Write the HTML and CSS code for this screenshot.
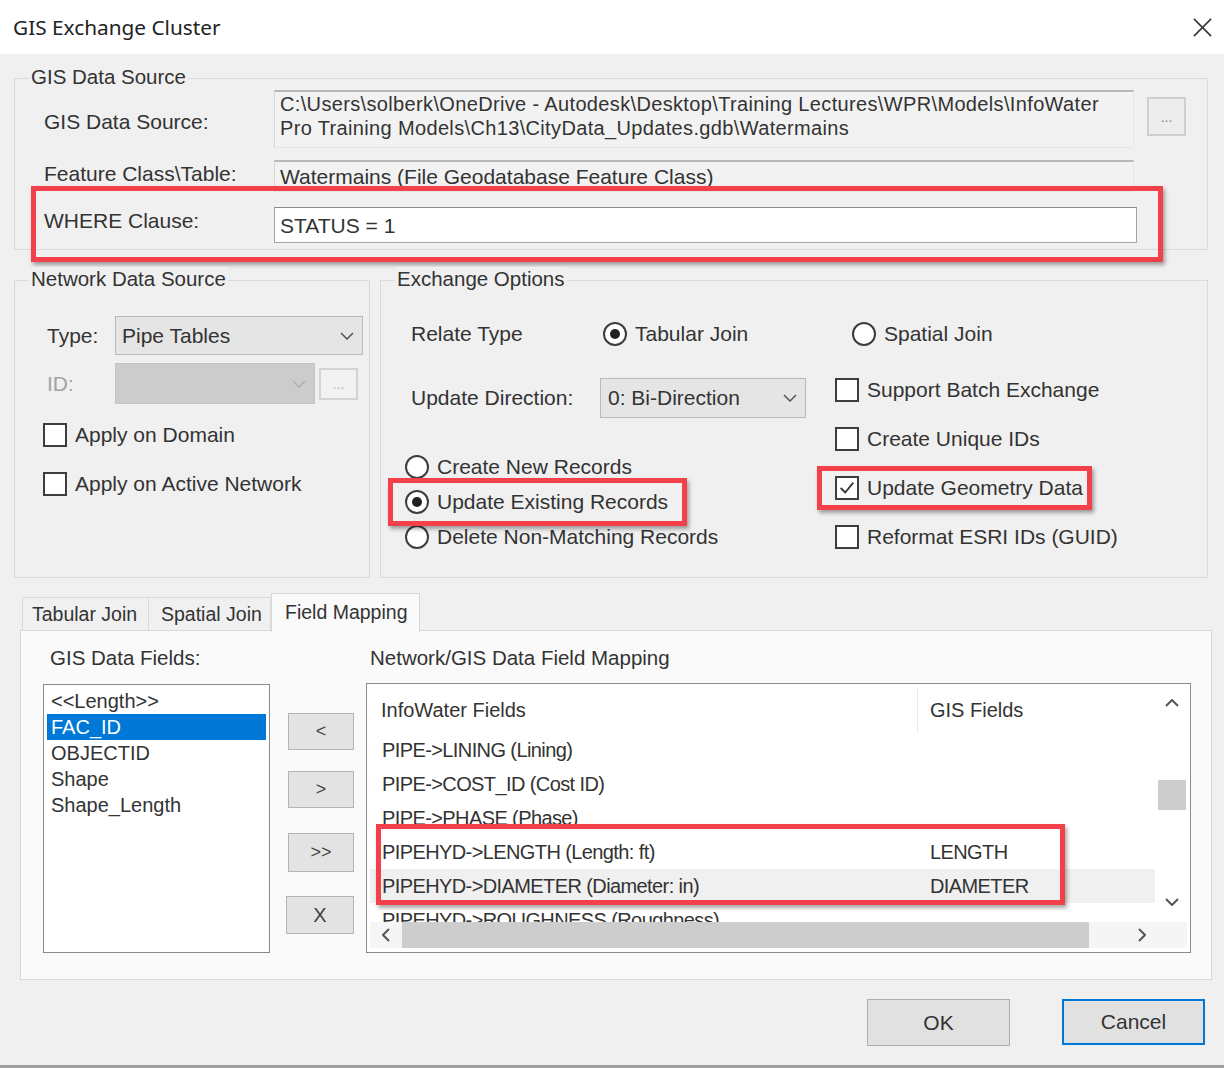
FILE: index.html
```html
<!DOCTYPE html>
<html>
<head>
<meta charset="utf-8">
<title>GIS Exchange Cluster</title>
<link rel="stylesheet" href="styles.css">
</head>
<body>
<div class="window">
  <div class="titlebar">
    <span class="title">GIS Exchange Cluster</span>
    <svg class="close" viewBox="0 0 22 22"><path d="M2 2 L20 20 M20 2 L2 20" stroke="#333" stroke-width="1.6" fill="none"/></svg>
  </div>

  <div class="content">
    <div class="group g-source">
      <span class="legend">GIS Data Source</span>
      <div class="srow r1">
        <span class="slbl">GIS Data Source:</span>
        <div class="robox tall"><span class="path">C:\Users\solberk\OneDrive - Autodesk\Desktop\Training Lectures\WPR\Models\InfoWater</span><br><span class="path">Pro Training Models\Ch13\CityData_Updates.gdb\Watermains</span></div>
        <div class="btn dots">...</div>
      </div>
      <div class="srow r2">
        <span class="slbl">Feature Class\Table:</span>
        <div class="robox short">Watermains (File Geodatabase Feature Class)</div>
      </div>
      <div class="srow r3 hl hl-where">
        <span class="slbl">WHERE Clause:</span>
        <div class="edit">STATUS = 1</div>
      </div>
    </div>

    <div class="mid">
      <div class="group g-net">
        <span class="legend">Network Data Source</span>
        <div class="nrow type-row">
          <span class="nlbl">Type:</span>
          <div class="combo type-combo"><span>Pipe Tables</span><svg class="chev" viewBox="0 0 14 8"><path d="M1 1 L7 7 L13 1" fill="none" stroke="#555" stroke-width="1.5"/></svg></div>
        </div>
        <div class="nrow id-row">
          <span class="nlbl disabled">ID:</span>
          <div class="combo id-combo"><span></span><svg class="chev" viewBox="0 0 14 8"><path d="M1 1 L7 7 L13 1" fill="none" stroke="#b0b0b0" stroke-width="1.5"/></svg></div>
          <div class="btn id-dots">...</div>
        </div>
        <div class="check net-check first"><span class="box"></span><span>Apply on Domain</span></div>
        <div class="check net-check"><span class="box"></span><span>Apply on Active Network</span></div>
      </div>

      <div class="group g-ex">
        <span class="legend">Exchange Options</span>
        <div class="ex-row1">
          <span class="relate-lbl">Relate Type</span>
          <div class="ropt tab-opt"><span class="radio on"></span><span>Tabular Join</span></div>
          <div class="ropt"><span class="radio"></span><span>Spatial Join</span></div>
        </div>
        <div class="ex-cols">
          <div class="ex-left">
            <div class="dir-row">
              <span class="dir-lbl">Update Direction:</span>
              <div class="combo dir-combo"><span>0: Bi-Direction</span><svg class="chev" viewBox="0 0 14 8"><path d="M1 1 L7 7 L13 1" fill="none" stroke="#555" stroke-width="1.5"/></svg></div>
            </div>
            <div class="rrow first"><span class="radio"></span><span>Create New Records</span></div>
            <div class="rrow hl hl-existing"><span class="radio on"></span><span>Update Existing Records</span></div>
            <div class="rrow"><span class="radio"></span><span>Delete Non-Matching Records</span></div>
          </div>
          <div class="ex-right">
            <div class="check"><span class="box"></span><span>Support Batch Exchange</span></div>
            <div class="check"><span class="box"></span><span>Create Unique IDs</span></div>
            <div class="check hl hl-geom"><span class="box"><svg viewBox="0 0 20 20"><path d="M3 10 L8 15 L17 4" fill="none" stroke="#333" stroke-width="2"/></svg></span><span>Update Geometry Data</span></div>
            <div class="check"><span class="box"></span><span>Reformat ESRI IDs (GUID)</span></div>
          </div>
        </div>
      </div>
    </div>

    <div class="tabs">
      <div class="tab t1">Tabular Join</div>
      <div class="tab t2">Spatial Join</div>
      <div class="tab t3 active">Field Mapping</div>
    </div>
    <div class="panel">
      <div class="col-left">
        <div class="plbl">GIS Data Fields:</div>
        <div class="listbox">
          <div class="li">&lt;&lt;Length&gt;&gt;</div>
          <div class="li sel">FAC_ID</div>
          <div class="li">OBJECTID</div>
          <div class="li">Shape</div>
          <div class="li">Shape_Length</div>
        </div>
      </div>
      <div class="col-btns">
        <div class="mbtn b1">&lt;</div>
        <div class="mbtn b2">&gt;</div>
        <div class="mbtn b3">&gt;&gt;</div>
        <div class="mbtn b4">X</div>
      </div>
      <div class="col-right">
        <div class="plbl map-lbl">Network/GIS Data Field Mapping</div>
        <div class="grid">
          <div class="gmain">
            <div class="ghead"><span class="gc1">InfoWater Fields</span><span class="gc2">GIS Fields</span></div>
            <div class="grow"><span class="gc1">PIPE-&gt;LINING (Lining)</span><span class="gc2"></span></div>
            <div class="grow"><span class="gc1">PIPE-&gt;COST_ID (Cost ID)</span><span class="gc2"></span></div>
            <div class="grow"><span class="gc1">PIPE-&gt;PHASE (Phase)</span><span class="gc2"></span></div>
            <div class="hl hl-rows">
              <div class="grow"><span class="gc1">PIPEHYD-&gt;LENGTH (Length: ft)</span><span class="gc2">LENGTH</span></div>
              <div class="grow alt"><span class="gc1">PIPEHYD-&gt;DIAMETER (Diameter: in)</span><span class="gc2">DIAMETER</span></div>
            </div>
            <div class="grow"><span class="gc1">PIPEHYD-&gt;ROUGHNESS (Roughness)</span><span class="gc2"></span></div>
          </div>
          <div class="vscroll">
            <div class="sa"><svg viewBox="0 0 14 8"><path d="M1 7 L7 1 L13 7" fill="none" stroke="#555" stroke-width="2"/></svg></div>
            <div class="vthumb"></div>
            <div class="spacer"></div>
            <div class="sa down"><svg viewBox="0 0 14 8"><path d="M1 1 L7 7 L13 1" fill="none" stroke="#555" stroke-width="2"/></svg></div>
          </div>
          <div class="hscroll">
            <div class="ha"><svg viewBox="0 0 8 14"><path d="M7 1 L1 7 L7 13" fill="none" stroke="#555" stroke-width="2"/></svg></div>
            <div class="hthumb"></div>
            <div class="spacer"></div>
            <div class="ha right"><svg viewBox="0 0 8 14"><path d="M1 1 L7 7 L1 13" fill="none" stroke="#555" stroke-width="2"/></svg></div>
          </div>
          <div class="corner"></div>
        </div>
      </div>
    </div>

    <div class="footer">
      <div class="dbtn">OK</div>
      <div class="dbtn default">Cancel</div>
    </div>
  </div>
</div>
</body>
</html>
```

FILE: styles.css
```css
*, *::before, *::after { box-sizing: border-box; }
html, body { margin: 0; padding: 0; }
body {
  width: 1224px;
  height: 1068px;
  background: #f0f0f0;
  font-family: "Liberation Sans", Arial, sans-serif;
  font-size: 21px;
  color: #333;
  overflow: hidden;
}
.window {
  width: 1224px;
  height: 1068px;
  display: flex;
  flex-direction: column;
  border-bottom: 3px solid #a0a0a0;
}
.titlebar {
  height: 54px;
  flex: none;
  background: #fff;
  display: flex;
  align-items: center;
  justify-content: space-between;
  padding: 0 11px 0 13px;
}
.title {
  font-family: "Noto Sans", "Open Sans", sans-serif;
  font-size: 20.8px;
  color: #222;
}
.close { width: 21px; height: 21px; }

.content { flex: 1; padding: 0 16px 0 14px; }

.group { position: relative; border: 1px solid #dadada; }
.legend {
  position: absolute;
  top: -14px;
  left: 14px;
  padding: 0 2px;
  background: #f0f0f0;
  line-height: 24px;
  font-size: 20.5px;
}

/* GIS data source */
.g-source {
  margin-top: 24px;
  height: 172px;
  padding: 11px 0 0 29px;
}
.srow { display: flex; align-items: flex-start; }
.slbl { width: 230px; flex: none; line-height: 24px; }
.r1 { height: 58px; }
.r1 .slbl { margin-top: 20px; }
.r2 { height: 32px; margin-top: 12px; }
.r2 .slbl { margin-top: 2px; }
.r3 { height: 36px; margin-top: 15px; }
.r3 .slbl { margin-top: 2px; }
.robox {
  width: 860px;
  background: #f2f2f2;
  border-top: 2px solid #b8b8b8;
  border-left: 1px solid #d6d6d6;
  border-right: 1px solid #e6e6e6;
  border-bottom: 1px solid #e6e6e6;
  padding: 0 5px;
  white-space: nowrap;
  overflow: hidden;
}
.robox.tall { height: 58px; line-height: 23px; }
.robox.short { height: 32px; line-height: 29px; }
.path { font-size: 20px; letter-spacing: 0.35px; }
.btn {
  display: flex;
  align-items: center;
  justify-content: center;
  background: #ededed;
  border: 2px solid #cfcfcf;
  color: #888;
  font-size: 14px;
}
.dots { width: 39px; height: 39px; margin: 7px 0 0 13px; }
.edit {
  width: 863px;
  height: 36px;
  background: #fff;
  border: 1px solid #a3a3a3;
  border-top-color: #8a8a8a;
  padding: 2px 0 0 5px;
  line-height: 32px;
}

/* highlight annotations */
.hl { position: relative; }
.hl::after {
  content: "";
  position: absolute;
  border: 5px solid #f2414a;
  box-shadow: 2px 3px 4px rgba(0, 0, 0, 0.35);
  pointer-events: none;
}
.hl-where::after { top: -21px; left: -13px; width: 1132px; height: 76px; }
.hl-existing::after { top: -6px; left: -17px; width: 299px; height: 48px; }
.hl-geom::after { top: -10px; left: -18px; width: 275px; height: 44px; }
.hl-rows::after { top: -11px; left: 6px; width: 689px; height: 81px; }

/* middle groups */
.mid { display: flex; gap: 10px; margin-top: 30px; height: 298px; }
.g-net { width: 356px; padding: 35px 0 0 32px; }
.g-ex { width: 828px; padding: 38px 0 0 24px; }

.nrow { display: flex; align-items: center; }
.nlbl { width: 68px; flex: none; }
.nlbl.disabled { color: #a3a3a3; }
.type-row { height: 39px; }
.id-row { height: 41px; margin-top: 8px; }
.combo {
  display: flex;
  align-items: center;
  justify-content: space-between;
  background: #e5e5e5;
  border: 1px solid #b9b9b9;
  padding: 0 8px 0 6px;
  height: 100%;
}
.chev { width: 14px; height: 8px; }
.type-combo { width: 248px; }
.id-combo { width: 200px; background: #cccccc; border-color: #c4c4c4; }
.id-dots { width: 39px; height: 32px; margin-left: 4px; color: #b5b5b5; background: #f2f2f2; border-color: #d3d3d3; }

.check { display: flex; align-items: center; height: 24px; }
.box {
  width: 24px;
  height: 24px;
  flex: none;
  border: 2px solid #3d3d3d;
  background: #fff;
  margin-right: 8px;
  display: flex;
  align-items: center;
  justify-content: center;
}
.box svg { width: 18px; height: 18px; }
.net-check { margin-left: -4px; margin-top: 25px; }
.net-check.first { margin-top: 19px; }

.radio {
  width: 24px;
  height: 24px;
  flex: none;
  border: 2px solid #3d3d3d;
  border-radius: 50%;
  background: #fff;
  margin-right: 8px;
  display: flex;
  align-items: center;
  justify-content: center;
}
.radio.on::after {
  content: "";
  width: 10px;
  height: 10px;
  border-radius: 50%;
  background: #222;
}
.ex-row1 { display: flex; align-items: center; height: 30px; }
.relate-lbl { width: 198px; padding-left: 6px; flex: none; }
.ropt { display: flex; align-items: center; }
.tab-opt { width: 249px; }
.ex-cols { display: flex; margin-top: 29px; }
.ex-left { width: 430px; flex: none; }
.dir-row { display: flex; align-items: center; height: 40px; }
.dir-lbl { width: 195px; padding-left: 6px; flex: none; }
.dir-combo { width: 206px; padding-left: 7px; }
.rrow { display: flex; align-items: center; height: 35px; }
.rrow.first { margin-top: 31px; }
.ex-right { display: flex; flex-direction: column; gap: 25px; }

/* tabs */
.tabs {
  position: relative;
  z-index: 2;
  display: flex;
  align-items: flex-end;
  height: 37px;
  margin: 15px 0 0 8px;
  font-size: 19.5px;
}
.tab {
  height: 33px;
  line-height: 32px;
  background: #f0f0f0;
  border: 1px solid #d9d9d9;
  border-bottom: none;
  padding-left: 9px;
  white-space: nowrap;
}
.t1 { width: 127px; }
.t2 { width: 122px; border-left: none; padding-left: 12px; }
.t3 {
  width: 149px;
  height: 39px;
  line-height: 36px;
  margin-bottom: -2px;
  background: #fafafa;
  padding-left: 13px;
}

.panel {
  margin-left: 6px;
  width: 1192px;
  height: 350px;
  background: #fafafa;
  border: 1px solid #d9d9d9;
  display: flex;
  padding: 15px 0 0 22px;
}
.plbl { height: 24px; line-height: 24px; padding-left: 7px; font-size: 20.5px; }
.col-left { width: 227px; flex: none; }
.listbox {
  margin-top: 14px;
  height: 269px;
  background: #fff;
  border: 1px solid #8a8a8a;
  padding: 3px;
  font-size: 20px;
}
.li { height: 26px; line-height: 26px; padding-left: 4px; }
.li.sel { background: #0078d7; color: #fff; }

.col-btns {
  width: 68px;
  margin-left: 16px;
  display: flex;
  flex-direction: column;
  align-items: flex-end;
  padding-top: 67px;
}
.mbtn {
  width: 66px;
  height: 37px;
  background: #e3e3e3;
  border: 1px solid #b4b4b4;
  display: flex;
  align-items: center;
  justify-content: center;
  font-size: 18px;
  color: #444;
}
.b2 { margin-top: 21px; }
.b3 { margin-top: 25px; height: 39px; }
.b4 { margin-top: 24px; height: 38px; width: 68px; font-size: 20px; }

.col-right { width: 825px; margin-left: 12px; flex: none; }
.map-lbl { padding-left: 4px; }
.grid {
  margin-top: 13px;
  height: 270px;
  background: #fff;
  border: 1px solid #8a8a8a;
  padding: 4px 3px;
  display: grid;
  grid-template-columns: 787px 30px;
  grid-template-rows: 234px 26px;
  font-size: 20px;
}
.gmain { overflow: hidden; }
.ghead { display: flex; height: 45px; line-height: 45px; }
.gc1 { width: 548px; flex: none; padding-left: 11px; white-space: nowrap; }
.ghead .gc1 { border-right: 1px solid #ececec; }
.gc2 { padding-left: 12px; }
.grow { display: flex; height: 34px; line-height: 34px; width: 785px; letter-spacing: -0.6px; }
.grow .gc1 { padding-left: 12px; }
.grow.alt { background: #f0f0f0; }

.vscroll { display: flex; flex-direction: column; align-items: center; background: #fff; }
.sa { height: 30px; display: flex; align-items: center; justify-content: center; flex: none; }
.sa svg { width: 14px; height: 8px; }
.sa.down { margin-bottom: 5px; }
.vthumb { width: 28px; height: 30px; margin-top: 62px; background: #cdcdcd; flex: none; }
.spacer { flex: 1; }
.hscroll { display: flex; align-items: stretch; background: #f5f5f5; }
.ha { width: 32px; display: flex; align-items: center; justify-content: center; flex: none; }
.ha svg { width: 8px; height: 14px; }
.ha.right { width: 30px; }
.hthumb { width: 687px; background: #cdcdcd; flex: none; }
.corner { background: #f5f5f5; }

.footer {
  display: flex;
  justify-content: flex-end;
  gap: 52px;
  margin-top: 19px;
  padding-right: 3px;
}
.dbtn {
  width: 143px;
  height: 47px;
  background: #e1e1e1;
  border: 1px solid #adadad;
  display: flex;
  align-items: center;
  justify-content: center;
}
.dbtn.default { border: 2px solid #0078d7; height: 46px; }
```
